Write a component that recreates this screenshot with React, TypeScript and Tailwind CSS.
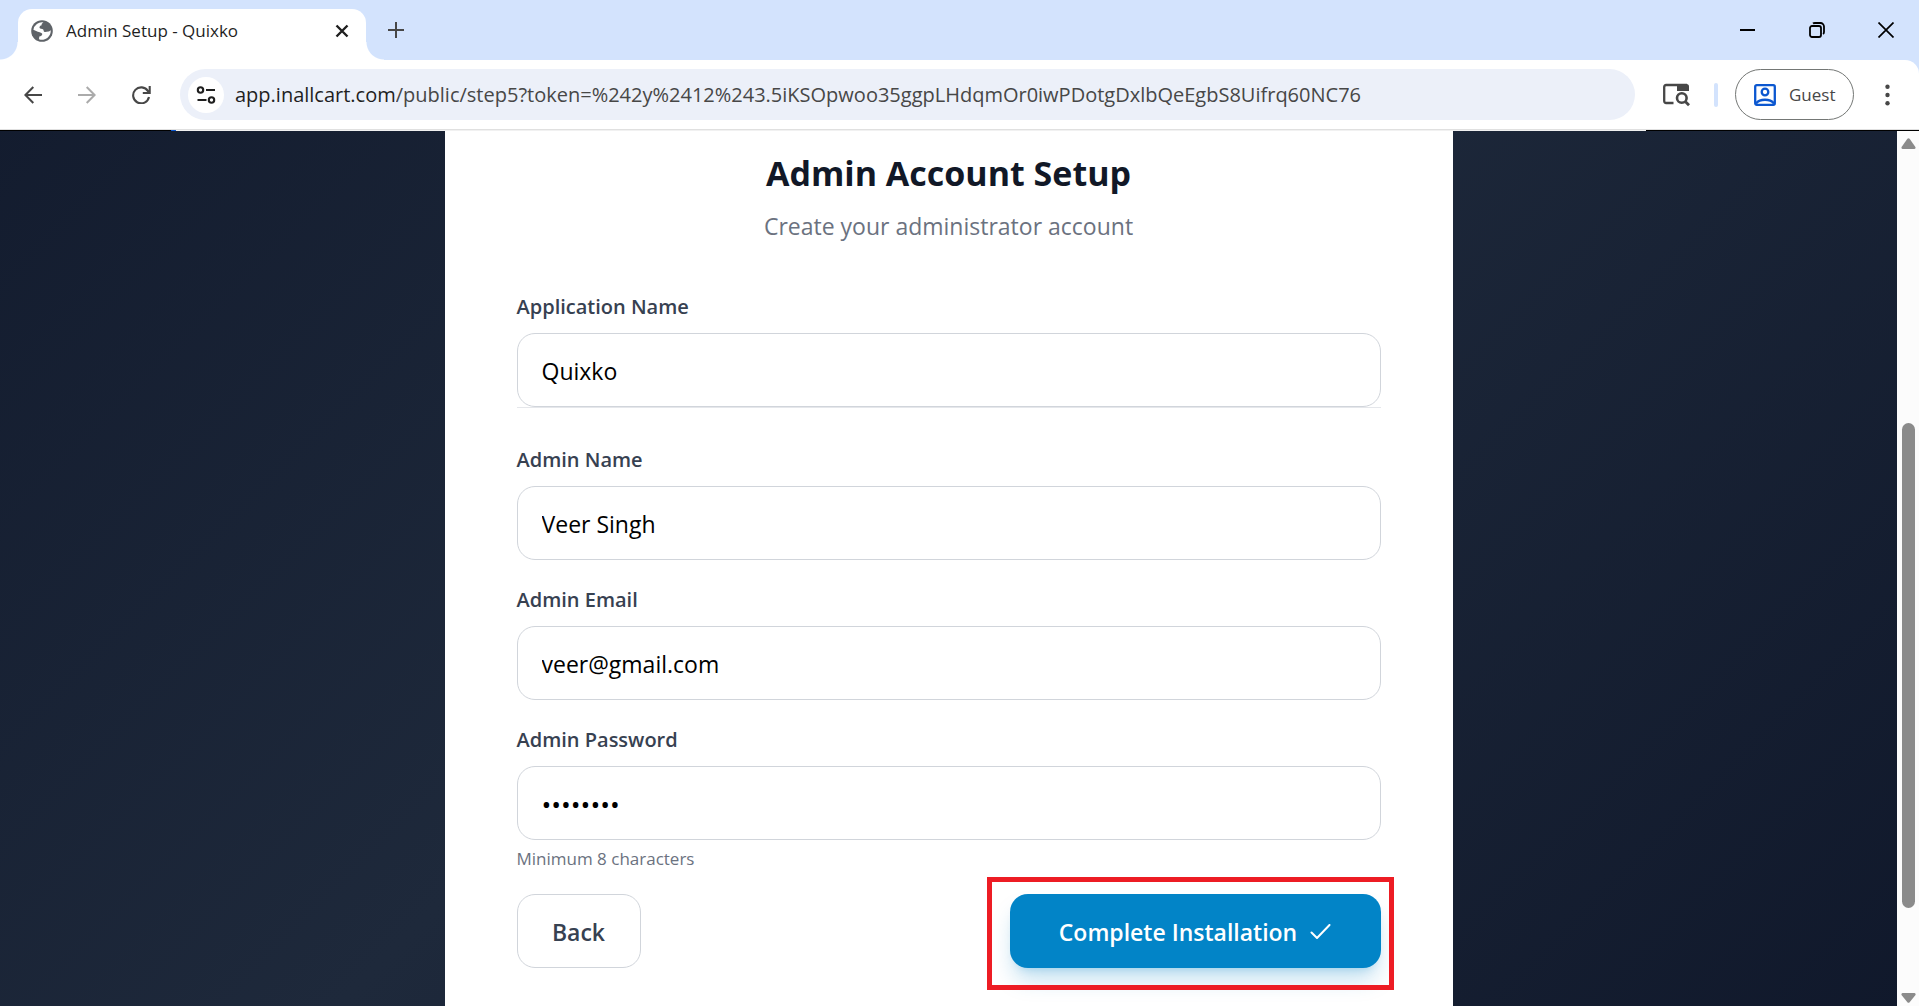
import React from "react";

const ui = "font-['Open_Sans','Noto_Sans',sans-serif]";

function TabStrip() {
  return (
    <header className="flex h-15 shrink-0 items-end bg-[#d3e3fd]">
      <div className="flex h-[51px] items-end">
        <div className="size-[18px] bg-[radial-gradient(circle_at_0_0,#d3e3fd_17px,#fff_18px)]" />
        <div className="flex h-[51px] w-[348px] items-center rounded-t-[14px] bg-white pr-[14px] pl-[13px] pb-[7px]">
          <svg width="22" height="22" viewBox="0 0 22 22" aria-hidden="true">
            <circle cx="11" cy="11" r="10.8" fill="#5f6368" />
            <path d="M12.500 2.400C11 3 10.300 4 10.700 5.200C9 5.500 8.300 6.500 8.600 8C9 9 11 8.500 12 9.300C13 10.200 12.200 11.500 13.600 12C15.200 12.200 16.600 11.200 18 11.500L19.700 10.300A8.700 8.700 0 0 1 8 19.200L8.300 16.500C10 16 11.500 15.300 11.200 13.800C10.500 12.300 8.200 12.300 6.800 11.700L2.400 9.800A8.700 8.700 0 0 1 12.500 2.400Z" fill="#fff" />
          </svg>
          <span className="ml-[13px] flex-1 text-[17px] text-[#1f1f1f]">Admin Setup - Quixko</span>
          <button aria-label="Close tab" className="grid size-5 place-items-center text-[#1f1f1f]">
            <svg width="14" height="14" viewBox="0 0 14 14" fill="none" stroke="currentColor" strokeWidth="2.400">
              <path d="M1.500 1.500 12.500 12.500M12.500 1.500 1.500 12.500" />
            </svg>
          </button>
        </div>
        <div className="size-[18px] bg-[radial-gradient(circle_at_100%_0,#d3e3fd_17px,#fff_18px)]" />
      </div>
      <button aria-label="New tab" className="mb-[21px] ml-[3px] grid size-[18px] place-items-center text-[#474747]">
        <svg width="16" height="16" viewBox="0 0 16 16" fill="none" stroke="currentColor" strokeWidth="2">
          <path d="M8 0V16M0 8H16" />
        </svg>
      </button>
      <div className="mb-[22px] ml-auto flex items-center gap-[53px] pr-[25px] text-black">
        <button aria-label="Minimize">
          <svg width="16" height="16" viewBox="0 0 16 16" fill="none" stroke="currentColor" strokeWidth="2"><path d="M0 8H15" /></svg>
        </button>
        <button aria-label="Restore">
          <svg width="16" height="16" viewBox="0 0 16 16" fill="none" stroke="currentColor" strokeWidth="1.800">
            <rect x="1" y="4" width="11" height="11" rx="2" />
            <path d="M4 1.500C4.500 1 5 1 6 1H11.500A3.500 3.500 0 0 1 15 4.500V10C15 11 15 11.500 14 12" />
          </svg>
        </button>
        <button aria-label="Close">
          <svg width="16" height="16" viewBox="0 0 16 16" fill="none" stroke="currentColor" strokeWidth="1.700"><path d="M.5 .5 15.500 15.500M15.500 .5 .5 15.500" /></svg>
        </button>
      </div>
    </header>
  );
}

function Toolbar() {
  return (
    <div className="shrink-0 bg-[#d3e3fd]">
      <nav className="flex h-[70px] items-center rounded-tr-[14px] border-b border-[#e0e0e0] bg-white pr-[29px] pl-6">
        <button aria-label="Back to previous page" className="text-[#474747]">
          <svg width="18" height="18" viewBox="0 0 18 18" fill="none" stroke="currentColor" strokeWidth="2"><path d="M18 9H1.500M9.300 1 1.400 9 9.300 17" /></svg>
        </button>
        <button aria-label="Forward" className="ml-9 text-[#ababab]">
          <svg width="18" height="18" viewBox="0 0 18 18" fill="none" stroke="currentColor" strokeWidth="2"><path d="M0 9H16.500M8.700 1 16.600 9 8.700 17" /></svg>
        </button>
        <button aria-label="Reload" className="ml-9 text-[#474747]">
          <svg width="19" height="18" viewBox="0 0 19 18" fill="none" stroke="currentColor" strokeWidth="2.100"><path d="M17 11A8 8 0 1 1 16 5.200L17 6.700M17.700 0V7H10.800" /></svg>
        </button>
        <div className="ml-[29px] flex h-[51px] flex-1 items-center rounded-full bg-[#ecf0f9] pl-2">
          <button aria-label="View site information" className="grid size-9 shrink-0 place-items-center rounded-full bg-white text-[#1f1f1f]">
            <svg width="20" height="18" viewBox="0 0 20 18" fill="none" stroke="currentColor" strokeWidth="2.100">
              <circle cx="4.500" cy="4" r="2.700" /><path d="M10 4H19M1.500 14H10.500" /><circle cx="15.500" cy="14" r="2.700" />
            </svg>
          </button>
          <div className="ml-[11px] flex flex-1 text-[20px] text-[#474747]">
            <span className="text-[#1f1f1f]">app.inallcart.com</span>
            <input aria-label="Address" readOnly className="flex-1 bg-transparent outline-none" defaultValue="/public/step5?token=%242y%2412%243.5iKSOpwoo35ggpLHdqmOr0iwPDotgDxlbQeEgbS8Uifrq60NC76" />
          </div>
        </div>
        <button aria-label="Search tabs" className="ml-7 text-[#474747]">
          <svg width="27" height="24" viewBox="0 0 27 24" fill="none" stroke="currentColor" strokeWidth="2.300">
            <path d="M10.500 20H3.200Q1.200 20 1.200 18V4Q1.200 2 3.200 2H24" />
            <path d="M14 1H23.500Q26 1 26 3.500V8H14Z" fill="currentColor" stroke="none" />
            <circle cx="18.800" cy="15" r="4.800" strokeWidth="2.600" /><path d="M22 18.200 26 22.200" strokeWidth="2.800" />
          </svg>
        </button>
        <div className="ml-6 h-6 w-1 rounded-full bg-[#d3e3fd]" />
        <button className="ml-[17px] flex h-[51px] w-[119px] items-center rounded-full border border-[#747775] pl-[18px] text-[17px] text-[#474747]">
          <svg width="22" height="22" viewBox="0 0 22 22" fill="none" stroke="#0b57d0" strokeWidth="2.300" className="mr-[13px]" aria-hidden="true">
            <rect x="1.200" y="1.200" width="19.600" height="19.600" rx="1.500" />
            <circle cx="11" cy="8" r="3.300" /><path d="M2 19.500C6 14.500 16 14.500 20 19.500" />
          </svg>
          Guest
        </button>
        <button aria-label="Menu" className="ml-[31px] text-[#474747]">
          <svg width="5" height="22" viewBox="0 0 5 22" fill="currentColor"><circle cx="2.500" cy="2.700" r="2.200" /><circle cx="2.500" cy="11" r="2.200" /><circle cx="2.500" cy="19.300" r="2.200" /></svg>
        </button>
      </nav>
      <div className="flex h-px bg-[#f1f1f1]" aria-hidden="true">
        <div className="w-[171px] bg-black" />
        <div className="w-[5px] bg-[#0b57d0]" />
        <div className="ml-auto w-[273px] bg-black" />
      </div>
    </div>
  );
}

function Field({ id, label, type = "text", value }: { id: string; label: string; type?: string; value: string }) {
  return (
    <div>
      <label htmlFor={id} className="mb-[11px] block text-[20px] leading-[30px] font-semibold text-[#374151]">{label}</label>
      <input
        id={id}
        type={type}
        defaultValue={value}
        className="block h-[74px] w-full rounded-[18px] border border-[#d1d5db] bg-white px-6 pt-[2px] text-[23px] text-black outline-none [&[type=password]]:text-[26px]"
      />
    </div>
  );
}

function Scrollbar() {
  return (
    <div className="flex w-[22px] shrink-0 flex-col items-center bg-[#fcfcfc] text-[#8b8b8b]" aria-hidden="true">
      <svg width="15" height="11" viewBox="0 0 15 11" fill="currentColor" className="mt-[7px]"><path d="M6.400 .8Q7.500-.4 8.600.8L14.400 9Q15 10.500 13.500 11H1.500Q0 10.500.6 9Z" /></svg>
      <div className="h-[274px]" />
      <div className="h-[485px] w-[13px] rounded-full bg-[#8b8b8b]" />
      <svg width="15" height="10" viewBox="0 0 15 10" fill="currentColor" className="mt-auto mb-[3px]"><path d="M6.400 9.200Q7.500 10.400 8.600 9.200L14.500 2Q15 .4 13.500 0H1.500Q0 .4.5 2Z" /></svg>
    </div>
  );
}

export default function App() {
  return (
    <div className={`flex h-screen flex-col overflow-hidden ${ui}`}>
      <TabStrip />
      <Toolbar />
      <div className="flex min-h-0 flex-1">
        <main className="flex flex-1 justify-center overflow-hidden bg-[linear-gradient(135deg,#0f172a,#1e293b_50%,#0f172a)] bg-[length:100%_1505px] bg-[position:0_-489px]">
          <form className="w-full max-w-[1008px] bg-white px-18 pt-[18px]">
            <h1 className="text-center text-[34px] leading-[48px] font-bold text-[#111827]">Admin Account Setup</h1>
            <p className="mt-[11px] text-center text-[23px] leading-9 text-[#6b7280]">Create your administrator account</p>
            <div className="mt-12 border-b border-[#e5e7eb]">
              <Field id="app-name" label="Application Name" value="Quixko" />
            </div>
            <div className="mt-[37px] flex flex-col gap-[25px]">
              <Field id="admin-name" label="Admin Name" value="Veer Singh" />
              <Field id="admin-email" label="Admin Email" value="veer@gmail.com" />
              <Field id="admin-password" label="Admin Password" type="password" value="password" />
            </div>
            <p className="mt-[7px] text-[17px] leading-6 text-[#6b7280]">Minimum 8 characters</p>
            <div className="mt-[23px] flex justify-between">
              <button type="button" className="h-[74px] w-[124px] rounded-[18px] border border-[#d1d5db] pt-[2px] text-[23px] font-semibold text-[#374151]">Back</button>
              <div className="relative">
                <button type="button" className="flex h-[74px] w-[371px] items-center justify-center gap-[13px] rounded-[18px] bg-[#0284c7] pt-[2px] text-[23px] font-semibold text-white shadow-[0_15px_22px_-4px_rgba(2,132,199,0.25),0_6px_9px_-6px_rgba(2,132,199,0.25)]">
                  Complete Installation
                  <svg width="21" height="17" viewBox="0 0 21 17" fill="none" stroke="currentColor" strokeWidth="2" strokeLinecap="round" strokeLinejoin="round" aria-hidden="true"><path d="M1.500 8.500 7 14 19.500 1" /></svg>
                </button>
                <div className="pointer-events-none absolute -top-[17px] -right-[13px] -bottom-[22px] -left-[23px] border-[5px] border-[#ed1c24]" />
              </div>
            </div>
          </form>
        </main>
        <Scrollbar />
      </div>
    </div>
  );
}
